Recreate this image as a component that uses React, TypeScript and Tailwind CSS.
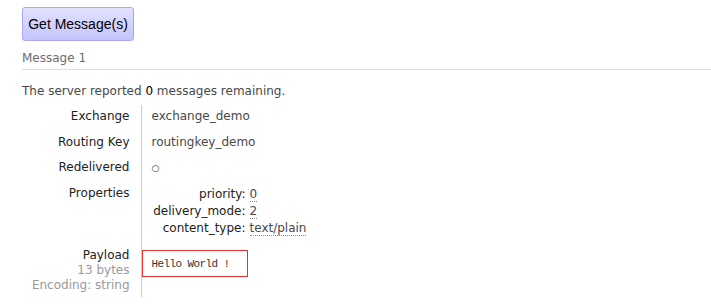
import React from 'react';

const props: [string, string][] = [
    ['priority', '0'],
    ['delivery_mode', '2'],
    ['content_type', 'text/plain'],
];

const App: React.FC = () => {
    return (
        <div className="min-h-[304px] bg-white pl-[22px] text-[12px] text-[#484848] [font-family:'DejaVu_Sans',Verdana,sans-serif]">
            <div className="pt-[7px]">
                <button
                    type="button"
                    className="h-[34px] w-[112px] rounded-[3px] border border-[#a8a8f2] bg-gradient-to-b from-[#e2e2ff] to-[#c4c4fa] text-[14px] text-black [font-family:'Liberation_Sans',Arial,sans-serif]"
                >
                    Get Message(s)
                </button>
            </div>

            <h3 className="mt-[9px] border-b border-[#e0e0e0] pb-[3px] text-[12px] leading-[16px] text-[#6d6d6d]">
                Message 1
            </h3>

            <p className="mt-[13px] leading-[16px]">
                The server reported <span className="text-black">0</span> messages remaining.
            </p>

            <table className="mt-[6px] border-collapse leading-[15px]">
                <tbody>
                    <tr>
                        <th className="w-[119px] pr-[11px] pt-[4px] pb-[6px] text-right align-top font-normal text-[#222]">Exchange</th>
                        <td className="border-l border-[#ccc] pl-[10px] pt-[4px] pb-[6px] align-top">exchange_demo</td>
                    </tr>
                    <tr>
                        <th className="pr-[11px] py-[5px] text-right align-top font-normal text-[#222]">Routing Key</th>
                        <td className="border-l border-[#ccc] pl-[10px] py-[5px] align-top">routingkey_demo</td>
                    </tr>
                    <tr>
                        <th className="pr-[11px] py-[5px] text-right align-top font-normal text-[#222]">Redelivered</th>
                        <td className="border-l border-[#ccc] pl-[10px] py-[5px] align-top">
                            <span className="text-[9px] text-[#333]">&#9675;</span>
                        </td>
                    </tr>
                    <tr>
                        <th className="pr-[11px] pt-[5px] pb-[10px] text-right align-top font-normal text-[#222]">Properties</th>
                        <td className="border-l border-[#ccc] pl-[10px] pt-[5px] pb-[10px] align-top">
                            <table className="border-collapse">
                                <tbody>
                                    {props.map(([k, v]) => (
                                        <tr key={k}>
                                            <th className="w-[98px] pr-[4px] text-right font-normal leading-[17px] text-[#222]">{k}:</th>
                                            <td className="leading-[17px]">
                                                <span className="border-b border-dotted border-[#888]">{v}</span>
                                            </td>
                                        </tr>
                                    ))}
                                </tbody>
                            </table>
                        </td>
                    </tr>
                    <tr>
                        <th className="pr-[11px] pt-[1px] pb-[4px] text-right align-top font-normal text-[#222]">
                            Payload
                            <div className="text-[#999]">13 bytes</div>
                            <div className="text-[#999]">Encoding: string</div>
                        </th>
                        <td className="border-l border-[#ccc] pt-[3px] pb-[6px] align-top">
                            <pre className="w-[106px] border border-[#e03030] pl-[9px] pt-[7px] pb-[5px] text-[11px] leading-[13px] tracking-[-0.6px] text-[#333] [font-family:'Liberation_Mono','Courier_New',monospace]">
                                Hello World !
                            </pre>
                        </td>
                    </tr>
                </tbody>
            </table>
        </div>
    );
};

export default App;
